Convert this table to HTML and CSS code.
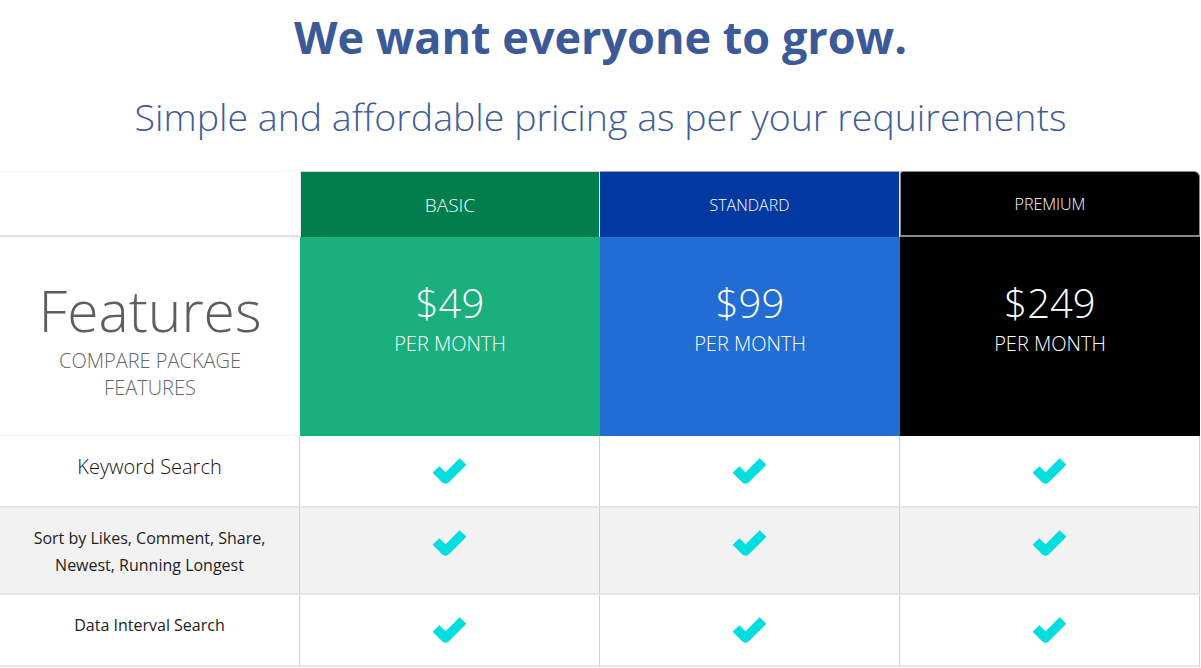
FILE: index.html
```html
<!DOCTYPE html>
<html lang="en">
<head>
<meta charset="utf-8">
<title>Pricing</title>
<link rel="stylesheet" href="styles.css">
</head>
<body>
<section class="intro">
  <h1 class="title">We want everyone to grow.</h1>
  <p class="subtitle">Simple and affordable pricing as per your requirements</p>
</section>
<div class="pricing">
  <div class="row head">
    <div class="cell blank"></div>
    <div class="cell plan basic">BASIC</div>
    <div class="cell plan standard">STANDARD</div>
    <div class="cell plan premium">PREMIUM</div>
  </div>
  <div class="row prices">
    <div class="cell features">
      <div class="features-title">Features</div>
      <div class="features-sub">COMPARE PACKAGE<br>FEATURES</div>
    </div>
    <div class="cell price basic-price"><div class="amount">$49</div><div class="period">PER MONTH</div></div>
    <div class="cell price standard-price"><div class="amount">$99</div><div class="period">PER MONTH</div></div>
    <div class="cell price premium-price"><div class="amount">$249</div><div class="period">PER MONTH</div></div>
  </div>
  <div class="row feature r1">
    <div class="cell name big">Keyword Search</div>
    <div class="cell check"><svg viewBox="0 0 37 30" width="37" height="30"><polyline points="5,13.5 14.5,23 32,5.5" /></svg></div>
    <div class="cell check"><svg viewBox="0 0 37 30" width="37" height="30"><polyline points="5,13.5 14.5,23 32,5.5" /></svg></div>
    <div class="cell check"><svg viewBox="0 0 37 30" width="37" height="30"><polyline points="5,13.5 14.5,23 32,5.5" /></svg></div>
  </div>
  <div class="row feature r2 alt">
    <div class="cell name">Sort by Likes, Comment, Share,<br>Newest, Running Longest</div>
    <div class="cell check"><svg viewBox="0 0 37 30" width="37" height="30"><polyline points="5,13.5 14.5,23 32,5.5" /></svg></div>
    <div class="cell check"><svg viewBox="0 0 37 30" width="37" height="30"><polyline points="5,13.5 14.5,23 32,5.5" /></svg></div>
    <div class="cell check"><svg viewBox="0 0 37 30" width="37" height="30"><polyline points="5,13.5 14.5,23 32,5.5" /></svg></div>
  </div>
  <div class="row feature r3">
    <div class="cell name">Data Interval Search</div>
    <div class="cell check"><svg viewBox="0 0 37 30" width="37" height="30"><polyline points="5,13.5 14.5,23 32,5.5" /></svg></div>
    <div class="cell check"><svg viewBox="0 0 37 30" width="37" height="30"><polyline points="5,13.5 14.5,23 32,5.5" /></svg></div>
    <div class="cell check"><svg viewBox="0 0 37 30" width="37" height="30"><polyline points="5,13.5 14.5,23 32,5.5" /></svg></div>
  </div>
</div>
</body>
</html>
```

FILE: styles.css
```css
* { box-sizing: border-box; }
html, body { margin: 0; padding: 0; background: #fff; }
body { font-family: "Open Sans", "Liberation Sans", sans-serif; overflow: hidden; }

.intro { text-align: center; padding-top: 10px; height: 171px; }
.title {
  margin: 0;
  font-size: 45px;
  line-height: 53px;
  font-weight: 700;
  color: #3d5a98;
}
.subtitle {
  margin: 31px 0 0;
  font-size: 37.5px;
  line-height: 46px;
  font-weight: 300;
  color: #3f5c9a;
}

.pricing { width: 1200px; }
.row { display: grid; grid-template-columns: 300px 300px 300px 300px; }

.head { height: 66px; }
.cell { text-align: center; }
.blank {
  border-top: 1px solid #f6f6f6;
  border-bottom: 2px solid #e2e2e2;
  box-shadow: 0 1px 2px rgba(0,0,0,0.06);
}
.plan {
  display: flex;
  align-items: center;
  justify-content: center;
  color: #fff;
  font-size: 16px;
  font-weight: 300;
  padding-top: 1px;
  border-top: 1px solid #cfd8d4;
  border-right: 1px solid #e8eef0;
}
.basic { background: #007e4c; font-size: 19px; padding-top: 0; border-left: 1px solid #e8e8e8; }
.standard { background: #0239a0; border-top-color: #8aa0d0; }
.premium {
  background: #000;
  border: 1px solid #8a8a8a;
  border-bottom: 2px solid #8a8a8a;
  border-top-right-radius: 6px;
  border-top-left-radius: 3px;
}

.prices { height: 199px; }
.features { padding-top: 38px; border-bottom: 1px solid #f0f0f0; }
.features-title {
  font-size: 57px;
  line-height: 70px;
  font-weight: 300;
  color: #5e5e5e;
}
.features-sub {
  margin-top: 2px;
  font-size: 20px;
  line-height: 27px;
  font-weight: 300;
  color: #666;
}
.price { color: #fff; padding-top: 42px; }
.amount { font-size: 40px; line-height: 48px; font-weight: 300; }
.period { margin-top: 5px; font-size: 20px; line-height: 24px; font-weight: 300; }
.basic-price { background: #19b07e; }
.standard-price { background: #216dd3; }
.premium-price { background: #000; }

.feature .cell {
  border-right: 1px solid #d0d0d0;
  border-bottom: 2px solid #e6e6e6;
  padding-top: 17px;
}
.r1 { height: 72px; }
.r2 { height: 87px; }
.r3 { height: 72px; }
.alt { background: #f2f2f2; }
.name { font-size: 16px; line-height: 27px; color: #222; }
.name.big { font-size: 20px; font-weight: 300; color: #111; }
.feature .check { padding-top: 20px; }
.check svg { display: block; margin: 0 auto; }
.check polyline {
  fill: none;
  stroke: #00dee0;
  stroke-width: 9.5;
  stroke-linejoin: round;
  stroke-linecap: butt;
}
```
